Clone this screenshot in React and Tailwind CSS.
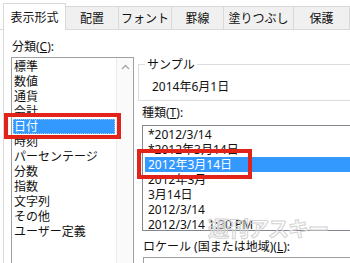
import React from 'react';

const tabs = [
    { label: '配置', w: 'w-[53px]' },
    { label: 'フォント', w: 'w-[53px]' },
    { label: '罫線', w: 'w-[52px]' },
    { label: '塗りつぶし', w: 'w-[70px]' },
    { label: '保護', w: 'w-[56px]' },
];

const categories = ['標準', '数値', '通貨', '会計', '日付', '時刻', 'パーセンテージ', '分数', '指数', '文字列', 'その他', 'ユーザー定義'];

const types = ['*2012/3/14', '*2012年3月14日', '2012年3月14日', '2012年3月', '3月14日', '2012/3/14', '2012/3/14 1:30 PM'];

const App = () => {
    return (
        <div className="relative w-[350px] h-[263px] overflow-hidden bg-white text-[12px] leading-[15px] text-[#111] font-['Noto_Sans','Noto_Sans_CJK_JP',sans-serif]">
            {/* Tabs */}
            <div className="flex h-[30px] items-end border-b border-[#d9d9d9] pl-[3px]">
                <div className="relative z-10 -mb-px flex h-[27px] w-[67px] items-center justify-center border border-b-0 border-[#d9d9d9] bg-white">
                    表示形式
                </div>
                {tabs.map(t => (
                    <div key={t.label} className={`flex h-[23px] shrink-0 items-center justify-center border-t border-r border-[#d9d9d9] bg-[#f0f0f0] ${t.w}`}>
                        {t.label}
                    </div>
                ))}
            </div>

            <div className="ml-[3px] flex h-[233px] border-l border-[#d9d9d9]">
                {/* Category list */}
                <div className="shrink-0 pl-[7px] pt-[9px]">
                    <div className="pl-px">分類(<span className="underline">C</span>):</div>
                    <div className="mt-[3px] flex h-[220px] w-[123px] border border-[#a0a0a0]">
                        <div className="flex-1 pt-px">
                            {categories.map(c => (
                                c === '日付' ? (
                                    <div key={c} className="relative mx-px bg-[#3399ff] pl-px text-white outline outline-1 -outline-offset-1 outline-dotted outline-[#9cc9f5]">
                                        {c}
                                        <div className="absolute top-[-6px] left-[-9px] h-[26px] w-[117px] border-4 border-[#e2231a]" />
                                    </div>
                                ) : (
                                    <div key={c} className="mx-px pl-px">{c}</div>
                                )
                            ))}
                        </div>
                        <div className="flex w-[17px] justify-center border-l border-[#ececec] bg-[#fafafa] pt-[6px]">
                            <svg width="9" height="6" viewBox="0 0 9 6">
                                <polyline points="1,5 4.5,1.5 8,5" fill="none" stroke="#a6a6a6" strokeWidth="1.3" />
                            </svg>
                        </div>
                    </div>
                </div>

                {/* Right side */}
                <div className="flex-1 pt-[27px]">
                    <fieldset className="ml-[4px] w-[230px] border border-[#dcdcdc] pb-[6px]">
                        <legend className="ml-[6px] px-[2px]">サンプル</legend>
                        <div className="pl-[13px] pt-[7px]">2014年6月1日</div>
                    </fieldset>

                    <div className="mt-[4px] pl-[8px]">種類(<span className="underline">T</span>):</div>
                    <div className="mt-[5px] ml-[8px] h-[106px] w-[230px] border border-[#828790] pt-px">
                        {types.map((t, i) => (
                            i === 2 ? (
                                <div key={t} className="relative ml-[2px] bg-[#3399ff] pl-[3px] text-white">
                                    {t}
                                    <div className="absolute top-[-8px] left-[-8px] h-[30px] w-[115px] border-4 border-[#e2231a]" />
                                </div>
                            ) : (
                                <div key={t} className="ml-[2px] pl-[3px]">{t}</div>
                            )
                        ))}
                    </div>

                    <div className="mt-[8px] pl-[9px]">ロケール (国または地域)(<span className="underline">L</span>):</div>
                    <div className="mt-[3px] ml-[9px] h-[22px] w-[230px] border border-[#a0a0a0]" />
                </div>
            </div>

            {/* watermark */}
            <div className="pointer-events-none absolute left-[208px] top-[215px] text-[21px] leading-[26px] font-bold tracking-[-1px] text-transparent [-webkit-text-stroke:1px_#d2d2d2]">
                週刊アスキー
            </div>
        </div>
    );
};

export default App;
